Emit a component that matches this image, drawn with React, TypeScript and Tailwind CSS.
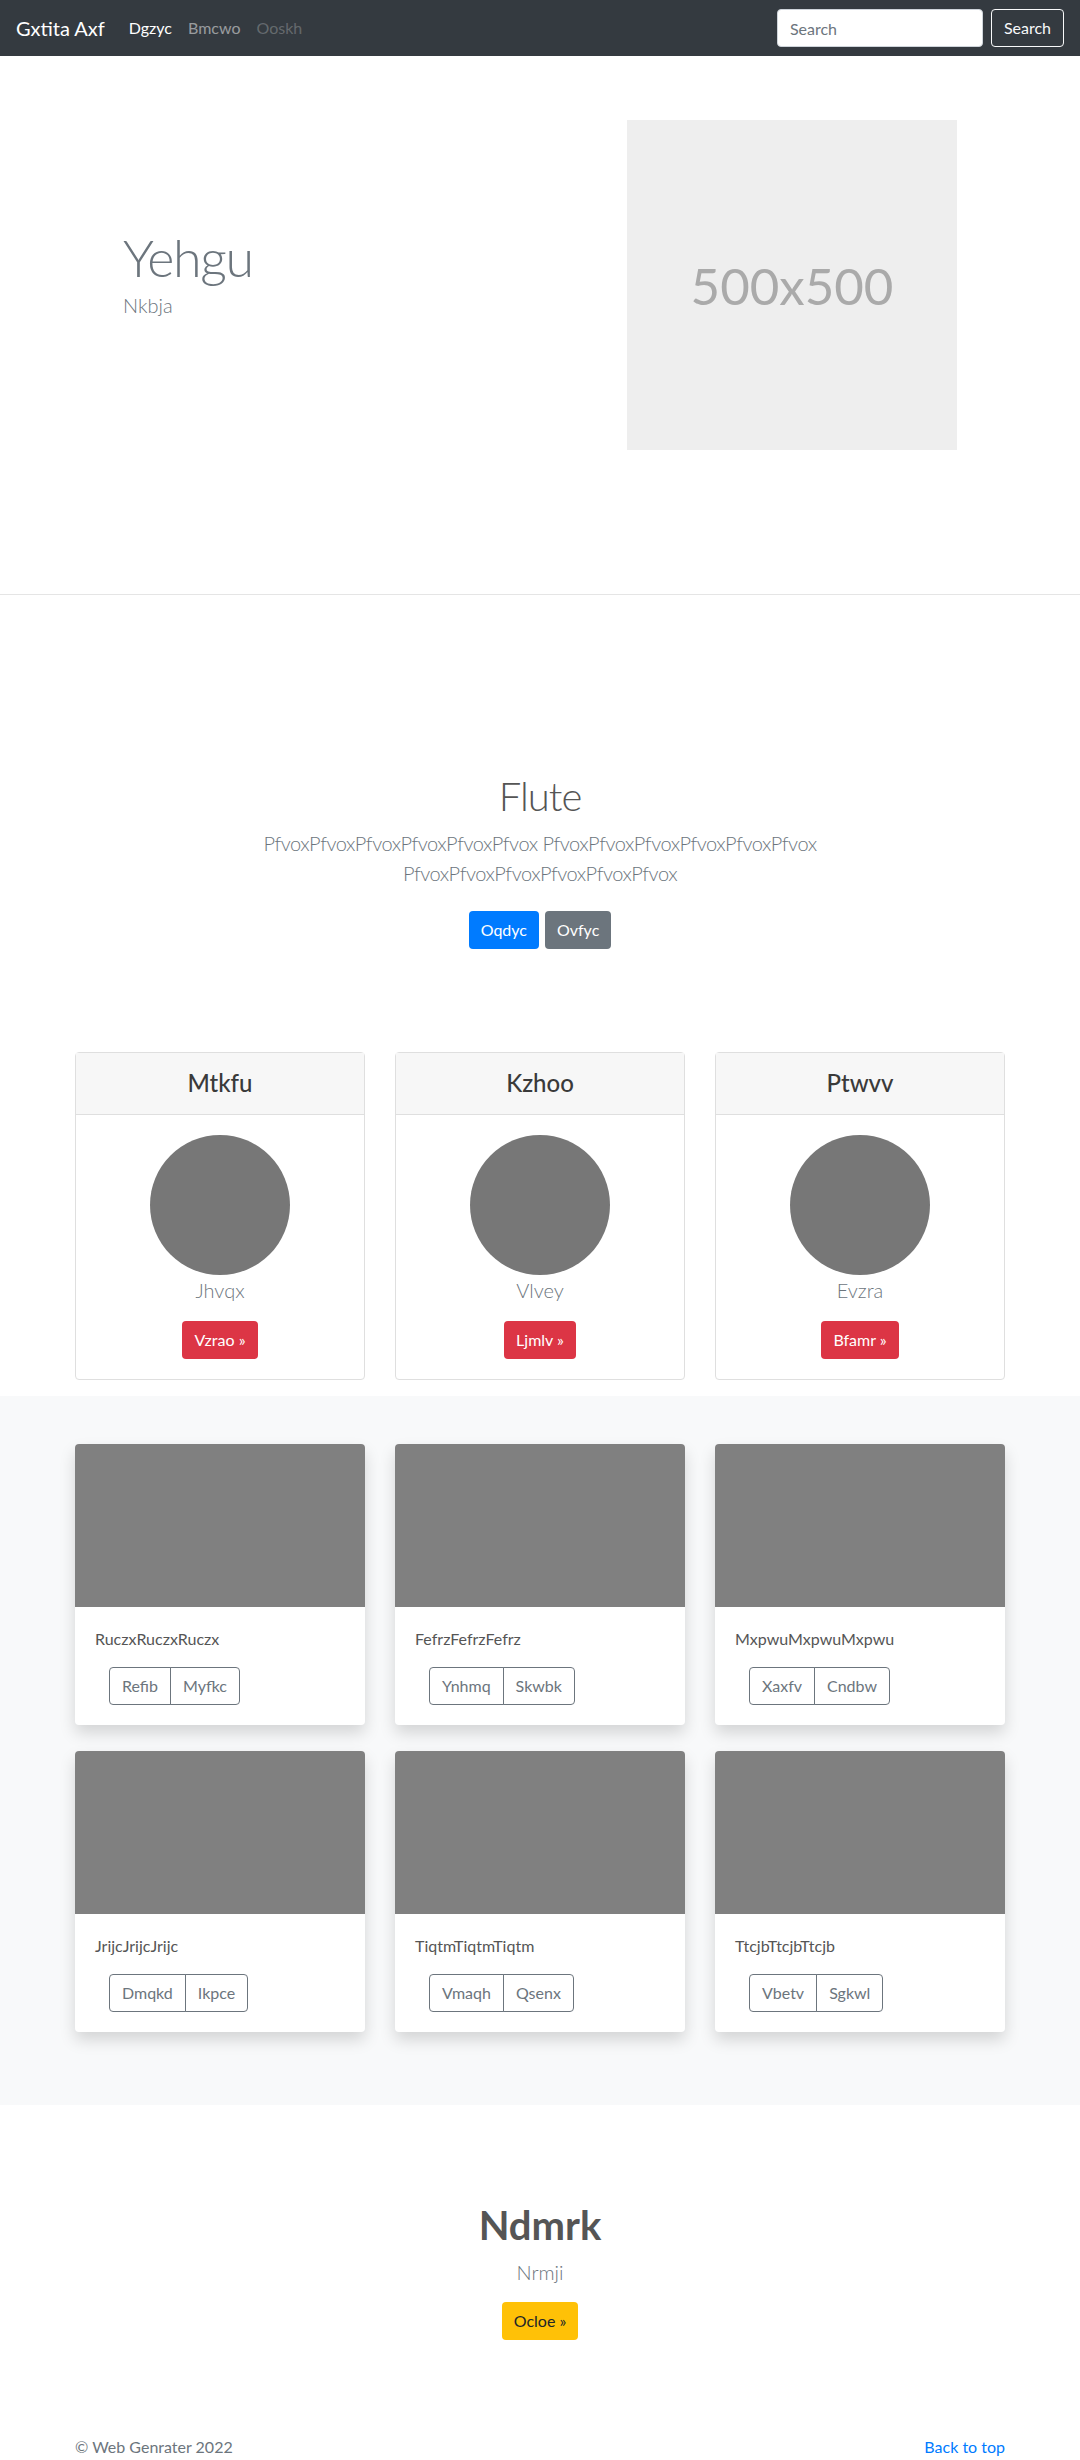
const PRICING = [
  { title: "Mtkfu", name: "Jhvqx", cta: "Vzrao »" },
  { title: "Kzhoo", name: "Vlvey", cta: "Ljmlv »" },
  { title: "Ptwvv", name: "Evzra", cta: "Bfamr »" },
];

const ALBUM = [
  { text: "RuczxRuczxRuczx", a: "Refib", b: "Myfkc" },
  { text: "FefrzFefrzFefrz", a: "Ynhmq", b: "Skwbk" },
  { text: "MxpwuMxpwuMxpwu", a: "Xaxfv", b: "Cndbw" },
  { text: "JrijcJrijcJrijc", a: "Dmqkd", b: "Ikpce" },
  { text: "TiqtmTiqtmTiqtm", a: "Vmaqh", b: "Qsenx" },
  { text: "TtcjbTtcjbTtcjb", a: "Vbetv", b: "Sgkwl" },
];

function Navbar() {
  return (
    <nav className="flex h-[56px] items-center bg-[#343a40] px-4">
      <a className="mr-4 py-[5px] text-xl leading-[30px] text-white">Gxtita Axf</a>
      <ul className="flex">
        <li>
          <a className="block px-2 py-2 leading-6 text-white">Dgzyc</a>
        </li>
        <li>
          <a className="block px-2 py-2 leading-6 text-white/50">Bmcwo</a>
        </li>
        <li>
          <a className="block px-2 py-2 leading-6 text-white/25">Ooskh</a>
        </li>
      </ul>
      <form className="ml-auto flex items-center">
        <input
          type="text"
          placeholder="Search"
          className="mr-2 h-[38px] w-[206px] rounded border border-[#ced4da] bg-white px-3 text-base text-[#495057] placeholder:text-[#6c757d]"
        />
        <button type="button" className="h-[38px] rounded border border-[#f8f9fa] px-3 text-base text-[#f8f9fa]">
          Search
        </button>
      </form>
    </nav>
  );
}

function Hero() {
  return (
    <section className="border-b border-[#e5e5e5] pt-[64px] pb-[144px]">
      <div className="mx-auto flex w-[960px]">
        <div className="w-1/2 px-[15px]">
          <div className="pl-12 pt-[106px]">
            <h1 className="text-[52px] font-light leading-[1.2] tracking-tight text-[#6c757d]">Yehgu</h1>
            <p className="mt-[2px] text-xl font-light leading-[30px] text-[#6c757d]">Nkbja</p>
          </div>
        </div>
        <div className="flex w-1/2 justify-end px-[15px]">
          <div className="mr-[48px] flex h-[330px] w-[330px] items-center justify-center bg-[#eeeeee]">
            <span className="text-[51px] leading-none text-[#aaaaaa]">500x500</span>
          </div>
        </div>
      </div>
    </section>
  );
}

function Intro() {
  return (
    <section className="pt-[177px] pb-[103px] text-center">
      <h1 className="mb-2 text-[40px] font-light leading-[1.2] tracking-tight text-[#555555]">Flute</h1>
      <p className="mx-auto mb-[23px] w-[640px] text-xl font-light leading-[30px] tracking-tight text-[#6c757d]">
        PfvoxPfvoxPfvoxPfvoxPfvoxPfvox PfvoxPfvoxPfvoxPfvoxPfvoxPfvox PfvoxPfvoxPfvoxPfvoxPfvoxPfvox
      </p>
      <div className="flex justify-center gap-[6px]">
        <a className="rounded bg-[#007bff] px-3 py-[7px] text-base leading-6 text-white">Oqdyc</a>
        <a className="rounded bg-[#6c757d] px-3 py-[7px] text-base leading-6 text-white">Ovfyc</a>
      </div>
    </section>
  );
}

function Pricing() {
  return (
    <div className="mx-auto grid w-[960px] grid-cols-3 gap-[30px] px-[15px] pb-[16px]">
      {PRICING.map((p) => (
        <div key={p.title} className="rounded border border-[#dfdfdf] bg-white text-center">
          <div className="border-b border-[#dfdfdf] bg-[#f7f7f7] py-4">
            <h4 className="text-2xl font-medium leading-[1.2] text-[#3a3a3a]">{p.title}</h4>
          </div>
          <div className="p-5">
            <div className="mx-auto h-[140px] w-[140px] rounded-full bg-[#777777]" />
            <p className="mb-4 text-xl font-light leading-[30px] text-[#6c757d]">{p.name}</p>
            <a className="inline-block rounded bg-[#dc3545] px-3 py-[7px] text-base leading-6 text-white">{p.cta}</a>
          </div>
        </div>
      ))}
    </div>
  );
}

function Album() {
  return (
    <section className="bg-[#f8f9fa] pt-12 pb-[73px]">
      <div className="mx-auto grid w-[960px] grid-cols-3 gap-x-[30px] gap-y-[26px] px-[15px]">
        {ALBUM.map((c) => (
          <div key={c.text} className="overflow-hidden rounded bg-white shadow-[0_8px_16px_rgba(0,0,0,0.15)]">
            <div className="h-[163px] bg-[#808080]" />
            <div className="p-5">
              <p className="mb-4 text-base leading-6 text-[#555555]">{c.text}</p>
              <div className="ml-[14px] inline-flex">
                <button type="button" className="rounded-l border border-[#6c757d] px-3 py-[6px] text-base leading-6 text-[#6c757d]">
                  {c.a}
                </button>
                <button type="button" className="-ml-px rounded-r border border-[#6c757d] px-3 py-[6px] text-base leading-6 text-[#6c757d]">
                  {c.b}
                </button>
              </div>
            </div>
          </div>
        ))}
      </div>
    </section>
  );
}

function Closing() {
  return (
    <section className="pt-24 pb-[47px] text-center">
      <h2 className="mb-2 text-[40px] font-bold leading-[1.2] text-[#555555]">Ndmrk</h2>
      <p className="mb-[15px] text-xl font-light leading-[30px] text-[#6c757d]">Nrmji</p>
      <a className="inline-block rounded bg-[#ffc107] px-3 py-[7px] text-base leading-6 text-[#212529]">Ocloe »</a>
    </section>
  );
}

export default function App() {
  return (
    <div className="min-h-screen bg-white font-['Lato',sans-serif] text-[#212529]">
      <Navbar />
      <Hero />
      <Intro />
      <Pricing />
      <Album />
      <Closing />
      <footer className="mx-auto flex w-[960px] justify-between px-[15px] py-12 text-base leading-6">
        <p className="text-[#6c757d]">© Web Genrater 2022</p>
        <a className="text-[#007bff]">Back to top</a>
      </footer>
    </div>
  );
}
